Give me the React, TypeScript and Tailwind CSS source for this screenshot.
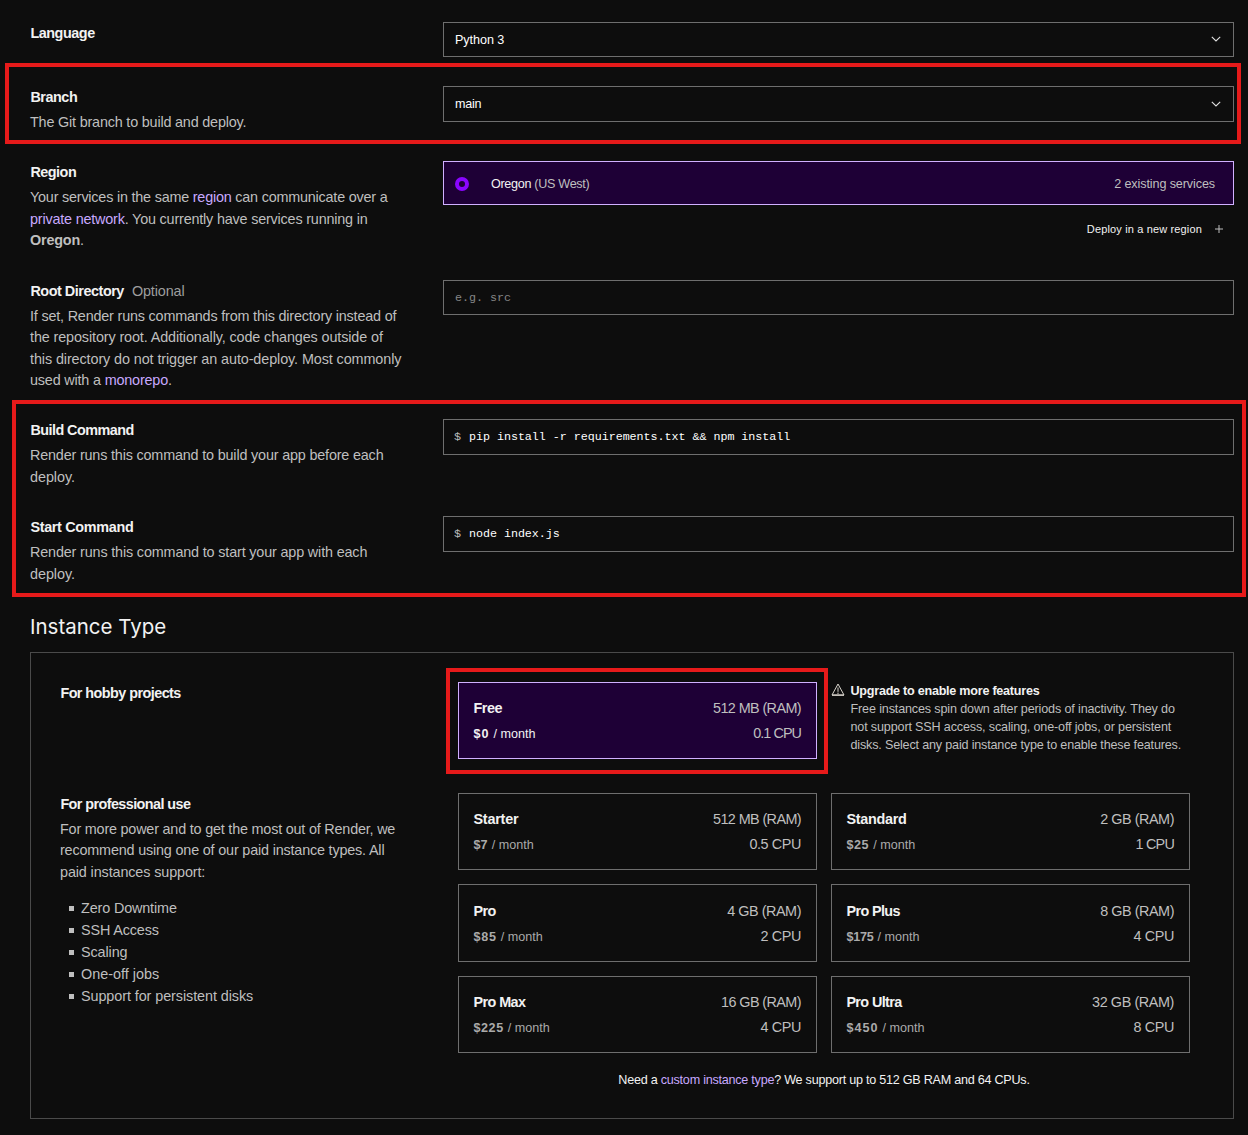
import type { ReactNode } from "react";

const link = "text-[#c8a9ff]";

function Label({ children, className = "" }: { children: ReactNode; className?: string }) {
  return <h3 className={"h-[26px] pt-px pl-[0.4px] text-[14.4px] leading-[21.6px] font-bold whitespace-nowrap text-[#f2f2f2] " + className}>{children}</h3>;
}

function Line({ children, className }: { children: ReactNode; className: string }) {
  return <span className={"block whitespace-nowrap " + className}>{children}</span>;
}

function Desc({ children, tight = false }: { children: ReactNode; tight?: boolean }) {
  return <p className={"text-[14.4px] text-[#bfbfbf] " + (tight ? "leading-[21.4px]" : "leading-[21.6px]")}>{children}</p>;
}

function Row({ label, children, className }: { label: ReactNode; children?: ReactNode; className: string }) {
  return (
    <section className={"grid grid-cols-[413px_791px] items-start " + className}>
      <div>{label}</div>
      <div>{children}</div>
    </section>
  );
}

function Chevron({ className = "" }: { className?: string }) {
  return (
    <svg className={className} width="10" height="6" viewBox="0 0 10 6" fill="none" stroke="#e0e0e0" strokeWidth="1.1">
      <path d="M0.8 0.8 5 4.9 9.2 0.8" />
    </svg>
  );
}

function Select({ value, className, valueClass = "", iconClass = "" }: { value: string; className: string; valueClass?: string; iconClass?: string }) {
  return (
    <div className={"flex items-center justify-between border border-[#6e6e6e] pr-[12px] pl-[11px] text-[12.6px] text-white " + className}>
      <span className={valueClass}>{value}</span>
      <Chevron className={iconClass} />
    </div>
  );
}

function Command({ value }: { value: string }) {
  return (
    <div className="flex h-[36px] items-center border border-[#6e6e6e] pt-[2px] pl-[10px] font-['Liberation_Mono'] text-[11.7px] text-white">
      <span className="w-[15px] text-[#bfbfbf]">$</span>
      <span className="tracking-[-0.03px]">{value}</span>
    </div>
  );
}

type Plan = {
  name: string;
  nameTrack: string;
  price: string;
  priceTrack: string;
  ram: string;
  ramTrack: string;
  cpu: string;
  cpuTrack: string;
  box: string;
};

const plans: Plan[] = [
  { name: "Starter", nameTrack: "tracking-[-0.2px]", price: "$7", priceTrack: "tracking-[0.2px]", ram: "512 MB (RAM)", ramTrack: "tracking-[-0.6px]", cpu: "0.5 CPU", cpuTrack: "tracking-[-0.4px]", box: "h-[77px] pt-[14px]" },
  { name: "Standard", nameTrack: "tracking-[-0.28px]", price: "$25", priceTrack: "tracking-[0.6px]", ram: "2 GB (RAM)", ramTrack: "tracking-[-0.45px]", cpu: "1 CPU", cpuTrack: "tracking-[-0.8px]", box: "h-[77px] pt-[14px]" },
  { name: "Pro", nameTrack: "tracking-[-0.5px]", price: "$85", priceTrack: "tracking-[0.8px]", ram: "4 GB (RAM)", ramTrack: "tracking-[-0.45px]", cpu: "2 CPU", cpuTrack: "tracking-[-0.4px]", box: "h-[78px] pt-[15px]" },
  { name: "Pro Plus", nameTrack: "tracking-[-0.6px]", price: "$175", priceTrack: "tracking-[-0.2px]", ram: "8 GB (RAM)", ramTrack: "tracking-[-0.45px]", cpu: "4 CPU", cpuTrack: "tracking-[-0.4px]", box: "h-[78px] pt-[15px]" },
  { name: "Pro Max", nameTrack: "tracking-[-0.55px]", price: "$225", priceTrack: "tracking-[0.6px]", ram: "16 GB (RAM)", ramTrack: "tracking-[-0.58px]", cpu: "4 CPU", cpuTrack: "tracking-[-0.4px]", box: "h-[77px] pt-[14px]" },
  { name: "Pro Ultra", nameTrack: "tracking-[-0.62px]", price: "$450", priceTrack: "tracking-[1px]", ram: "32 GB (RAM)", ramTrack: "tracking-[-0.4px]", cpu: "8 CPU", cpuTrack: "tracking-[-0.4px]", box: "h-[77px] pt-[14px]" },
];

const free: Plan = {
  name: "Free", nameTrack: "tracking-[-0.4px]", price: "$0", priceTrack: "tracking-[1px]", ram: "512 MB (RAM)", ramTrack: "tracking-[-0.6px]", cpu: "0.1 CPU", cpuTrack: "tracking-[-0.95px]", box: "h-[77px] pt-[14px]",
};

function PlanCard({ plan, selected = false }: { plan: Plan; selected?: boolean }) {
  return (
    <div className={"flex w-[359px] justify-between border pr-[15px] pl-[14.4px] whitespace-nowrap " + plan.box + (selected ? " border-[#d0b0ff] bg-[#1e0036]" : " border-[#6e6e6e]")}>
      <div>
        <div className={"text-[14.4px] leading-[22px] font-bold text-[#f2f2f2] " + plan.nameTrack}>{plan.name}</div>
        <div className={"mt-[4px] flex gap-[4px] text-[12.6px] leading-[22px] " + (selected ? "text-[#f2f2f2]" : "text-[#aaaaaa]")}>
          <b className={plan.priceTrack}>{plan.price}</b>
          <span>/ month</span>
        </div>
      </div>
      <div className="text-right text-[14.4px] leading-[22px] text-[#bfbfbf]">
        <div className={plan.ramTrack}>{plan.ram}</div>
        <div className={"mt-[3px] " + plan.cpuTrack}>{plan.cpu}</div>
      </div>
    </div>
  );
}

const features: [string, string][] = [
  ["Zero Downtime", "tracking-[-0.14px]"],
  ["SSH Access", "tracking-[-0.14px]"],
  ["Scaling", "tracking-[-0.1px]"],
  ["One-off jobs", "tracking-[0px]"],
  ["Support for persistent disks", "tracking-[-0.08px]"],
];

export default function App() {
  return (
    <main className="relative h-[1135px] w-[1248px] overflow-hidden bg-[#0d0d0d] pt-[22px] pl-[30px] font-['Liberation_Sans',sans-serif]">
      <Row className="h-[64px]" label={<Label className="tracking-[-0.46px]">Language</Label>}>
        <Select value="Python 3" className="h-[35px]" valueClass="pt-[2px] tracking-[-0.05px]" iconClass="mb-px" />
      </Row>

      <Row
        className="h-[75px]"
        label={
          <>
            <Label className="tracking-[-0.46px]">Branch</Label>
            <Desc><Line className="tracking-[-0.19px]">The Git branch to build and deploy.</Line></Desc>
          </>
        }
      >
        <Select value="main" className="h-[36px] tracking-[-0.3px]" />
      </Row>

      <Row
        className="h-[119px]"
        label={
          <>
            <Label className="tracking-[-0.49px]">Region</Label>
            <Desc>
              <Line className="tracking-[-0.21px]">Your services in the same <a className={link}>region</a> can communicate over a</Line>
              <Line className="tracking-[-0.19px]"><a className={link}>private network</a>. You currently have services running in</Line>
              <Line className="tracking-[-0.18px]"><b>Oregon</b>.</Line>
            </Desc>
          </>
        }
      >
        <div className="flex h-[44px] items-center border border-[#d0b0ff] bg-[#1e0036] pt-px pr-[18px] pl-[11px] text-[12.6px] text-[#bfbfbf]">
          <span className="mr-[22px] h-[14px] w-[14px] rounded-full border-4 border-[#8a05ff]" />
          <span className="pt-px tracking-[-0.31px]"><span className="text-[#f2f2f2]">Oregon</span> (US West)</span>
          <span className="ml-auto pt-px tracking-[-0.11px]">2 existing services</span>
        </div>
        <div className="mt-[16px] flex h-[16px] items-center justify-end gap-[13px] pr-[11px] text-[11px] text-[#f2f2f2]">
          <span className="tracking-[0.15px]">Deploy in a new region</span>
          <svg width="8" height="8" viewBox="0 0 8 8" stroke="#bfbfbf" strokeWidth="1"><path d="M4 0v8M0 4h8" /></svg>
        </div>
      </Row>

      <Row
        className="h-[139px]"
        label={
          <>
            <Label className="tracking-[-0.46px]">Root Directory<span className="ml-[8px] font-normal tracking-[-0.13px] text-[#9e9e9e]">Optional</span></Label>
            <Desc tight>
              <Line className="tracking-[-0.19px]">If set, Render runs commands from this directory instead of</Line>
              <Line className="tracking-[-0.12px]">the repository root. Additionally, code changes outside of</Line>
              <Line className="tracking-[-0.1px]">this directory do not trigger an auto-deploy. Most commonly</Line>
              <Line className="tracking-[-0.18px]">used with a <a className={link}>monorepo</a>.</Line>
            </Desc>
          </>
        }
      >
        <div className="flex h-[35px] items-center border border-[#6e6e6e] pt-[2px] pl-[11px] font-['Liberation_Mono'] text-[11.7px] tracking-[-0.021px] text-[#858585]">e.g. src</div>
      </Row>

      <Row
        className="h-[97px]"
        label={
          <>
            <Label className="tracking-[-0.54px]">Build Command</Label>
            <Desc>
              <Line className="tracking-[-0.18px]">Render runs this command to build your app before each</Line>
              <Line className="tracking-[-0.06px]">deploy.</Line>
            </Desc>
          </>
        }
      >
        <Command value="pip install -r requirements.txt && npm install" />
      </Row>

      <Row
        className="h-[97px]"
        label={
          <>
            <Label className="tracking-[-0.32px]">Start Command</Label>
            <Desc>
              <Line className="tracking-[-0.16px]">Render runs this command to start your app with each</Line>
              <Line className="tracking-[-0.06px]">deploy.</Line>
            </Desc>
          </>
        }
      >
        <Command value="node index.js" />
      </Row>

      <h2 className="h-[39px] font-['Inter'] text-[20.5px] leading-[28px] font-normal text-[#f2f2f2]">Instance Type</h2>

      <div className="h-[467px] w-[1204px] border border-[#4a4a4a] pt-[29px] pl-[29px]">
        <div className="grid h-[111px] grid-cols-[398px_359px_1fr] items-start">
          <Label className="tracking-[-0.55px]">For hobby projects</Label>
          <PlanCard plan={free} selected />
          <div className="flex pl-[14px] text-[12.6px] leading-[18px] text-[#bfbfbf]">
            <svg className="mt-px mr-[5.5px]" width="14" height="13" viewBox="0 0 14 13" fill="none" stroke="#d8d4cc" strokeWidth="1">
              <path d="M7 1 13 12H1Z" />
              <path d="M7 4.5V8.8M7 9.6V11" />
              <path d="M1 12.2H13" strokeWidth="1.2" />
            </svg>
            <div>
              <Line className="font-bold tracking-[-0.25px] text-[#f2f2f2]">Upgrade to enable more features</Line>
              <Line className="tracking-[-0.15px]">Free instances spin down after periods of inactivity. They do</Line>
              <Line className="tracking-[-0.16px]">not support SSH access, scaling, one-off jobs, or persistent</Line>
              <Line className="tracking-[-0.18px]">disks. Select any paid instance type to enable these features.</Line>
            </div>
          </div>
        </div>
        <div className="grid grid-cols-[398px_732px] items-start">
          <div>
            <Label className="tracking-[-0.58px]">For professional use</Label>
            <Desc tight>
              <Line className="tracking-[-0.2px]">For more power and to get the most out of Render, we</Line>
              <Line className="tracking-[-0.18px]">recommend using one of our paid instance types. All</Line>
              <Line className="tracking-[-0.12px]">paid instances support:</Line>
            </Desc>
            <ul className="mt-[13.8px] text-[14.4px] leading-[22px] text-[#bfbfbf]">
              {features.map(([text, track]) => (
                <li key={text} className="flex items-center">
                  <span className="mr-[7px] ml-[9px] h-[5px] w-[5px] bg-[#bfbfbf]" />
                  <span className={track}>{text}</span>
                </li>
              ))}
            </ul>
          </div>
          <div>
            <div className="grid grid-cols-2 gap-x-[14px] gap-y-[14px]">
              {plans.map((plan) => <PlanCard key={plan.name} plan={plan} />)}
            </div>
            <p className="mt-[18px] text-center text-[12.6px] leading-[18px] tracking-[-0.245px] text-[#f2f2f2]">
              Need a <a className={link}>custom instance type</a>? We support up to 512 GB RAM and 64 CPUs.
            </p>
          </div>
        </div>
      </div>

      <div className="pointer-events-none absolute top-[63px] left-[5px] h-[81px] w-[1236px] border-4 border-[#e61a1a]" />
      <div className="pointer-events-none absolute top-[400px] left-[12px] h-[197px] w-[1234px] border-4 border-[#e61a1a]" />
      <div className="pointer-events-none absolute top-[668px] left-[446px] h-[106px] w-[382px] border-4 border-[#e61a1a]" />
    </main>
  );
}
